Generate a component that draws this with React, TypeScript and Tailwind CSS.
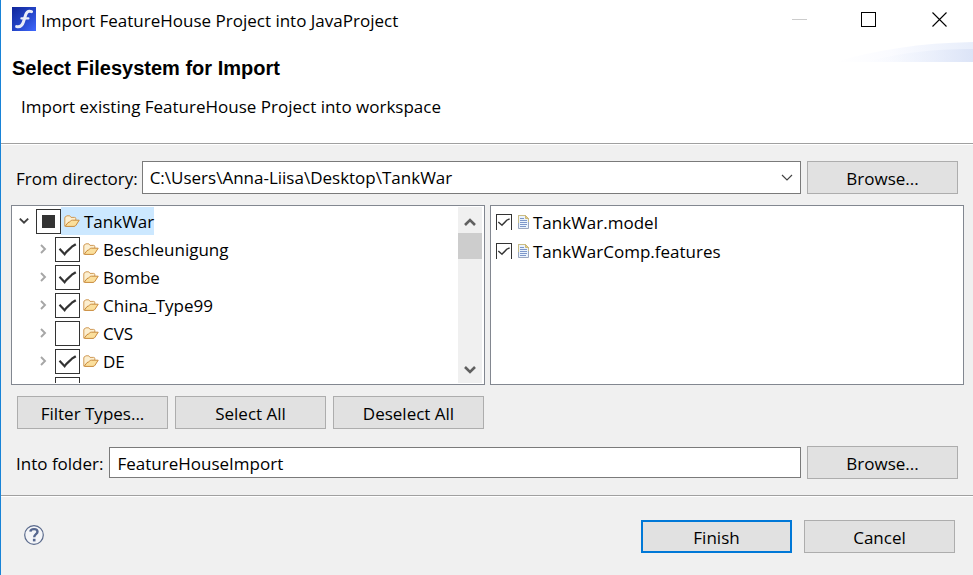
import { useEffect, useRef, useState } from "react";

type CheckProps = {
  id: string;
  checked: boolean;
  mixed?: boolean;
  label?: string;
  onChange?: (value: boolean) => void;
};

function TreeCheck({ id, checked, mixed = false, label, onChange }: CheckProps) {
  const ref = useRef<HTMLInputElement>(null);
  useEffect(() => {
    if (ref.current) ref.current.indeterminate = mixed;
  }, [mixed]);
  return (
    <span className="grid size-[25px] shrink-0">
      <input
        ref={ref}
        id={id}
        type="checkbox"
        aria-label={label}
        checked={checked}
        onChange={(e) => onChange?.(e.target.checked)}
        className="col-start-1 row-start-1 size-[25px] appearance-none border border-[#333333] bg-white"
      />
      <svg viewBox="0 0 25 25" className="pointer-events-none col-start-1 row-start-1 size-[25px]" aria-hidden="true">
        {mixed && <rect x="6" y="6" width="13" height="13" fill="#333333" />}
        {!mixed && checked && (
          <path
            d="M4.5 11.8 L9.6 17.2 C11.5 14 15 12 17 9.6 L20.8 7.2"
            fill="none"
            stroke="#333333"
            strokeWidth="2.2"
          />
        )}
      </svg>
    </span>
  );
}

function FileCheck({ id, checked, onChange }: CheckProps) {
  return (
    <span className="grid size-4 shrink-0">
      <input
        id={id}
        type="checkbox"
        checked={checked}
        onChange={(e) => onChange?.(e.target.checked)}
        className="col-start-1 row-start-1 size-4 appearance-none border border-b-0 border-[#333333] bg-white"
      />
      <svg viewBox="0 0 16 16" className="pointer-events-none col-start-1 row-start-1 size-4" aria-hidden="true">
        {checked && (
          <path d="M2.3 8 L6 11.2 C7.2 9.4 9.5 8.2 10.8 6.2 L13.6 4.8" fill="none" stroke="#333333" strokeWidth="1.4" />
        )}
      </svg>
    </span>
  );
}

function FolderIcon() {
  return (
    <svg viewBox="0 0 16 13" className="h-[13px] w-4 shrink-0" aria-hidden="true">
      <path
        d="M0.8 11.2 V3 Q0.8 1.6 2.2 1.3 L3 0.8 H5.8 L7 2.4 H10.6 Q11.8 2.4 11.8 3.6 V5"
        fill="#fcefd0"
        stroke="#d09a55"
        strokeWidth="1"
      />
      <path
        d="M1.2 11.3 L4 7.6 Q5.5 7.2 6.4 6.2 Q7.2 5.2 8.4 5.2 H15.2 L12 10.2 Q11.4 11.3 10 11.4 H1.4 Z"
        fill="#fbdf9c"
        stroke="#c98a3c"
        strokeWidth="1"
        strokeLinejoin="round"
      />
    </svg>
  );
}

function FileIcon() {
  return (
    <svg viewBox="0 0 12 14" className="h-[14px] w-3 shrink-0" aria-hidden="true">
      <path d="M0.5 0.5 H7.5 L10.5 3.5 V13.5 H0.5 Z" fill="#eaf3fc" stroke="#9aa6bf" />
      <path d="M0.5 8 V0.5 H7.5 L10.5 3.5 V7" fill="none" stroke="#cbbd85" />
      <path d="M7.5 0.5 V3.5 H10.5 Z" fill="#e4cd85" stroke="#cdb878" />
      <path d="M2 3.5 H6 M2 5.5 H9 M2 7.5 H9 M2 9.5 H9 M2 11.5 H8" stroke="#7d97ca" />
    </svg>
  );
}

function Expander({ open = false }: { open?: boolean }) {
  return (
    <svg viewBox="0 0 12 12" className="size-3 shrink-0" aria-hidden="true">
      {open ? (
        <path d="M1.8 3.6 L6 7.6 L10.2 3.6" fill="none" stroke="#404040" strokeWidth="1.9" />
      ) : (
        <path d="M4 2 L8 6 L4 10" fill="none" stroke="#a6a6a6" strokeWidth="1.9" />
      )}
    </svg>
  );
}

function PushButton({ children, primary = false }: { children: string; primary?: boolean }) {
  return (
    <button
      type="button"
      className={
        primary
          ? "h-[33px] w-[151px] shrink-0 border-2 border-[#0078d7] bg-[#e1e1e1] pt-0.5 text-center"
          : "h-[33px] w-[151px] shrink-0 border border-[#adadad] bg-[#e1e1e1] pt-0.5 text-center"
      }
    >
      {children}
    </button>
  );
}

function Separator() {
  return <div className="h-[2px] border-b border-white bg-[#a0a0a0]" />;
}

const folders = [
  { name: "Beschleunigung", checked: true },
  { name: "Bombe", checked: true },
  { name: "China_Type99", checked: true },
  { name: "CVS", checked: false },
  { name: "DE", checked: true },
  { name: "", checked: false },
];

const files = ["TankWar.model", "TankWarComp.features"];

export default function App() {
  const [folderState, setFolderState] = useState(folders.map((f) => f.checked));
  const [fileState, setFileState] = useState(files.map(() => true));
  const [target, setTarget] = useState("FeatureHouseImport");

  return (
    <div className="flex min-h-screen flex-col border-l border-[#1883d7] bg-[#f0f0f0] font-['Open_Sans','Noto_Sans',sans-serif] text-[17px] leading-6 text-black">
      <header className="bg-white">
        <div className="flex h-[42px] items-start pt-[7px] pr-[25px] pl-[11px]">
          <svg viewBox="0 0 24 24" className="size-6 shrink-0" aria-hidden="true">
            <defs>
              <linearGradient id="logo" x1="0" y1="0" x2="1" y2="1">
                <stop offset="0" stopColor="#10269a" />
                <stop offset="0.5" stopColor="#2343c4" />
                <stop offset="1" stopColor="#4069ff" />
              </linearGradient>
            </defs>
            <rect width="24" height="24" fill="url(#logo)" />
            <path
              d="M19.6 4.6 C16.4 3.6 14.6 4.8 13.6 8 L11.4 15 C10.2 18.8 8 20.3 4.6 19.6"
              fill="none"
              stroke="#e9ecf8"
              strokeWidth="3"
              strokeLinecap="round"
            />
            <path d="M9.4 11.4 H16.4" stroke="#e9ecf8" strokeWidth="2.2" strokeLinecap="round" />
          </svg>
          <span className="ml-[5px] flex-1 pt-0.5">Import FeatureHouse Project into JavaProject</span>
          <div className="flex gap-[54px] pt-[5px]">
            <button type="button" aria-label="Minimize" className="size-4">
              <svg viewBox="0 0 16 16" className="size-4">
                <path d="M0 7.5 H15" stroke="#cccccc" />
              </svg>
            </button>
            <button type="button" aria-label="Maximize" className="size-4">
              <svg viewBox="1 0 16 16" className="size-4 overflow-visible">
                <rect x="0.5" y="0.5" width="14" height="14" fill="none" stroke="#000000" />
              </svg>
            </button>
            <button type="button" aria-label="Close" className="size-4">
              <svg viewBox="0 0 16 16" className="size-4">
                <path d="M0.5 0.5 L14.5 14.5 M14.5 0.5 L0.5 14.5" stroke="#000000" strokeWidth="1.1" />
              </svg>
            </button>
          </div>
        </div>
        <div className="flex h-[101px] justify-between">
          <div className="pt-[14px] pl-[11px]">
            <h1 className="font-['Liberation_Sans',Arial,sans-serif] text-[20px] leading-6 font-bold">
              Select Filesystem for Import
            </h1>
            <p className="mt-[15px] pl-[9px]">Import existing FeatureHouse Project into workspace</p>
          </div>
          <svg viewBox="0 0 138 20" className="h-5 w-[138px] shrink-0" aria-hidden="true">
            <defs>
              <linearGradient id="wash" x1="0" x2="1">
                <stop offset="0" stopColor="#ffffff" />
                <stop offset="0.4" stopColor="#fafbff" />
                <stop offset="1" stopColor="#e8eefb" />
              </linearGradient>
              <linearGradient id="washDeep" x1="0" x2="1">
                <stop offset="0" stopColor="#f6f9ff" stopOpacity="0" />
                <stop offset="1" stopColor="#dce4f7" />
              </linearGradient>
            </defs>
            <path d="M0 20 C40 8 85 1 138 0 V20 Z" fill="url(#wash)" />
            <path d="M30 20 C65 11 95 7 138 7 V20 Z" fill="url(#washDeep)" />
          </svg>
        </div>
      </header>
      <Separator />

      <main>
        <div className="flex items-center pt-4 pr-[15px] pl-[15px]">
          <label htmlFor="source" className="pt-0.5">
            From directory:
          </label>
          <div className="ml-1 grid flex-1 items-center">
            <select
              id="source"
              className="col-start-1 row-start-1 h-[33px] w-full appearance-none border border-[#7a7a7a] bg-white pl-[7px]"
            >
              <option>C:\Users\Anna-Liisa\Desktop\TankWar</option>
            </select>
            <svg
              viewBox="0 0 12 8"
              className="pointer-events-none col-start-1 row-start-1 mr-2 h-2 w-3 justify-self-end"
              aria-hidden="true"
            >
              <path d="M1 1 L6 6 L11 1" fill="none" stroke="#444444" strokeWidth="1.2" />
            </svg>
          </div>
          <div className="ml-[6px] flex">
            <PushButton>Browse...</PushButton>
          </div>
        </div>

        <div className="mt-[11px] grid grid-cols-2 gap-[5px] pr-[9px] pl-[10px]">
          <div className="flex h-[180px] border border-[#828790] bg-white p-px">
            <ul className="h-full flex-1 overflow-hidden">
              <li className="flex h-7 items-center pl-[5px]">
                <Expander open />
                <span className="ml-[6px] flex">
                  <TreeCheck id="root-folder" checked={false} mixed />
                </span>
                <label htmlFor="root-folder" className="flex h-7 items-center gap-1 bg-[#cce8ff] pl-[3px]">
                  <FolderIcon />
                  <span className="pt-0.5">TankWar</span>
                </label>
              </li>
              {folders.map((f, i) => (
                <li key={i} className="flex h-7 items-center pl-6">
                  <Expander />
                  <span className="ml-[6px] flex">
                    <TreeCheck
                      id={`folder-${i}`}
                      label={f.name || "Folder"}
                      checked={folderState[i]}
                      onChange={(v) => setFolderState(folderState.map((s, j) => (j === i ? v : s)))}
                    />
                  </span>
                  <label htmlFor={`folder-${i}`} className="flex h-7 items-center gap-1 pl-[3px]">
                    <FolderIcon />
                    <span className="pt-0.5">{f.name}</span>
                  </label>
                </li>
              ))}
            </ul>
            <div className="mr-px flex w-6 flex-col bg-[#f0f0f0]">
              <button type="button" aria-label="Scroll up" className="flex h-[26px] items-center justify-center pt-1">
                <svg viewBox="0 0 12 10" className="h-[10px] w-3">
                  <path d="M1 8 L6 3 L11 8" fill="none" stroke="#606060" strokeWidth="2.6" />
                </svg>
              </button>
              <div className="h-[26px] bg-[#cdcdcd]" />
              <div className="flex-1" />
              <button type="button" aria-label="Scroll down" className="flex h-[26px] items-center justify-center">
                <svg viewBox="0 0 12 10" className="h-[10px] w-3">
                  <path d="M1 2 L6 7 L11 2" fill="none" stroke="#606060" strokeWidth="2.6" />
                </svg>
              </button>
            </div>
          </div>
          <ul className="h-[180px] border border-[#828790] bg-white pt-px pl-[5px]">
            {files.map((name, i) => (
              <li key={name} className="flex h-[29px] items-center">
                <FileCheck
                  id={`file-${i}`}
                  checked={fileState[i]}
                  onChange={(v) => setFileState(fileState.map((s, j) => (j === i ? v : s)))}
                />
                <label htmlFor={`file-${i}`} className="flex items-center gap-[3px] pl-[6px]">
                  <FileIcon />
                  <span className="pt-0.5">{name}</span>
                </label>
              </li>
            ))}
          </ul>
        </div>

        <div className="mt-[11px] flex gap-[7px] pl-4">
          <PushButton>Filter Types...</PushButton>
          <PushButton>Select All</PushButton>
          <PushButton>Deselect All</PushButton>
        </div>

        <div className="mt-[17px] mb-4 flex items-center pr-[15px] pl-[15px]">
          <label htmlFor="target" className="pt-0.5">
            Into folder:
          </label>
          <input
            id="target"
            type="text"
            value={target}
            onChange={(e) => setTarget(e.target.value)}
            className="ml-[6px] h-[31px] min-w-0 flex-1 border border-[#7a7a7a] bg-white pt-0.5 pl-[7px]"
          />
          <div className="ml-[6px] flex">
            <PushButton>Browse...</PushButton>
          </div>
        </div>
      </main>
      <Separator />

      <footer className="flex items-start gap-3 pt-[23px] pr-[18px] pb-[22px] pl-[23px]">
        <button type="button" aria-label="Help" className="mt-[5px] mr-auto size-5">
          <svg viewBox="0 0 20 20" className="size-5">
            <circle cx="10" cy="10" r="9.3" fill="#f4f5f8" stroke="#5a6a8c" strokeWidth="1.2" />
            <path
              d="M6.4 6.6 C6.6 3.4 13.5 3.2 13.5 6.8 C13.5 9.2 10.2 9.2 10.2 12.2"
              fill="none"
              stroke="#56678f"
              strokeWidth="2.4"
            />
            <rect x="8.9" y="13.8" width="2.6" height="2.6" fill="#56678f" />
          </svg>
        </button>
        <PushButton primary>Finish</PushButton>
        <PushButton>Cancel</PushButton>
      </footer>
    </div>
  );
}
